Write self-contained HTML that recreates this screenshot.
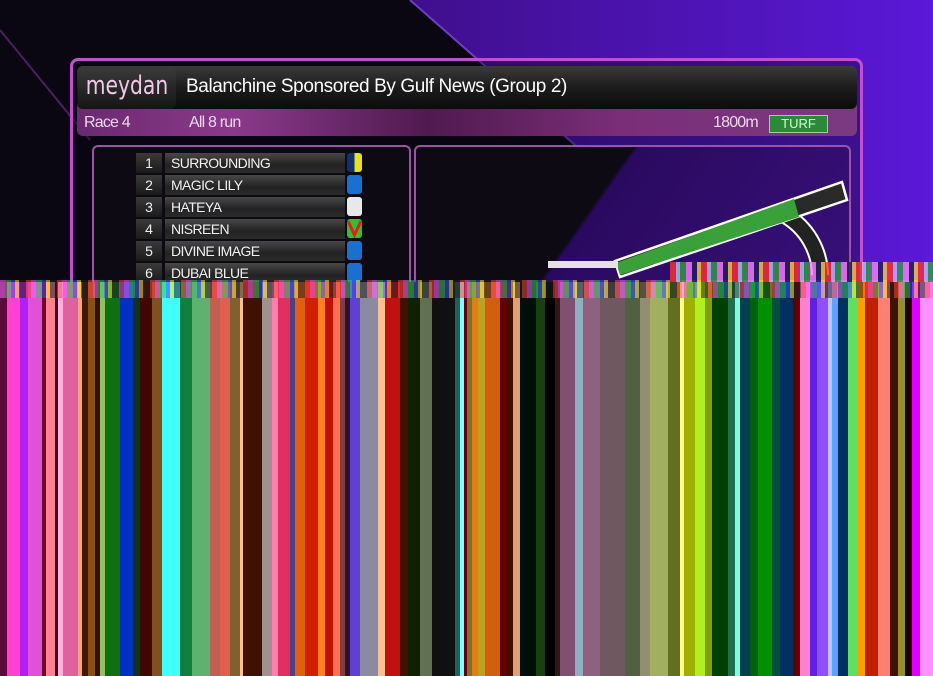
<!DOCTYPE html>
<html><head><meta charset="utf-8"><style>
*{margin:0;padding:0;box-sizing:border-box}
body{width:933px;height:676px;overflow:hidden;position:relative;background:#0a0510;font-family:"Liberation Sans",sans-serif}
.abs{position:absolute}
.row{position:absolute;left:136px;height:20px;width:208px}
.num{position:absolute;left:0;width:26px;height:20px;background:linear-gradient(#3a3a3a,#1a1a1a);color:#eee;font-size:14px;text-align:center;line-height:20px}
.nm{position:absolute;left:29px;width:180px;height:20px;background:linear-gradient(#484848,#222 60%,#2a2a2a);color:#f2f2f2;font-size:14px;line-height:20px;padding-left:6px;letter-spacing:-0.6px}
.silk{position:absolute;left:211px;width:15px;height:19px;border-radius:3px}
</style></head><body>
<svg class="abs" style="left:0;top:0" width="933" height="676">
<defs><linearGradient id="pg" x1="0" x2="1" y1="0" y2="0"><stop offset="0" stop-color="#2a0850"/><stop offset="1" stop-color="#5a18d8"/></linearGradient></defs>
<rect width="933" height="676" fill="url(#pg)"/>
<polygon points="0,0 410,0 740,290 0,290" fill="#0a0612"/>
<line x1="410" y1="0" x2="740" y2="290" stroke="#6a40c0" stroke-width="2"/>
<line x1="0" y1="30" x2="90" y2="140" stroke="#4a2060" stroke-width="2"/>
</svg>
<div class="abs" style="left:70px;top:58px;width:793px;height:240px;border:3px solid #c050d0;border-radius:8px;border-bottom:none;background:rgba(10,5,20,0.35)"></div>
<div class="abs" style="left:77px;top:66px;width:780px;height:70px;border-radius:6px;background:linear-gradient(90deg,#6a2a6e,#8a3a8a 20%,#501a50 45%,#7a2e78 70%,#7a3a80);"></div>
<div class="abs" style="left:77px;top:66px;width:780px;height:43px;border-radius:6px;background:linear-gradient(#3a3a3a,#1c1c1c 50%,#0c0c0c)"></div>
<div class="abs" style="left:78px;top:67px;width:98px;height:42px;border-radius:6px;background:linear-gradient(#3a3a3a,#151515);overflow:hidden"><div style="color:#f0c8e8;font-size:26px;line-height:38px;text-align:center;font-family:'DejaVu Sans',sans-serif;transform:scaleX(0.78);white-space:nowrap;margin-left:-20px;width:138px">meydan</div></div>
<div class="abs" style="left:186px;top:76px;color:#fff;font-size:19px;letter-spacing:-0.4px">Balanchine Sponsored By Gulf News (Group 2)</div>
<div class="abs" style="left:84px;top:114px;color:#f0d8f0;font-size:16px;letter-spacing:-0.8px">Race 4</div>
<div class="abs" style="left:189px;top:114px;color:#f0d8f0;font-size:16px;letter-spacing:-0.8px">All 8 run</div>
<div class="abs" style="left:713px;top:114px;color:#f0d8f0;font-size:16px;letter-spacing:-0.8px">1800m</div>
<div class="abs" style="left:769px;top:115px;width:59px;height:18px;background:#2a8a3a;border:1px solid #a0d0a0;color:#d0ffd0;font-size:13px;text-align:center;line-height:16px">TURF</div>
<div class="abs" style="left:92px;top:145px;width:319px;height:160px;border:2px solid #a050a8;border-radius:6px;border-bottom:none;background:#0e0a14"></div>
<div class="abs" style="left:414px;top:145px;width:437px;height:160px;border:2px solid #a050a8;border-radius:6px;border-bottom:none;background:linear-gradient(125deg,#0e0a14 0,#0e0a14 40%,#2a0a60 41%,#38107a)"></div>
<div class="row" style="top:153px"><div class="num">1</div><div class="nm">SURROUNDING</div><div class="silk" style="background:linear-gradient(90deg,#103070 50%,#e8e020 50%)"></div></div>
<div class="row" style="top:175px"><div class="num">2</div><div class="nm">MAGIC LILY</div><div class="silk" style="background:#1a70d0"></div></div>
<div class="row" style="top:197px"><div class="num">3</div><div class="nm">HATEYA</div><div class="silk" style="background:#e8e8e8"></div></div>
<div class="row" style="top:219px"><div class="num">4</div><div class="nm">NISREEN</div><div class="silk" style="background:#30c030"><svg width="15" height="19"><polyline points="1,2 7.5,16 14,2" fill="none" stroke="#e02020" stroke-width="3"/></svg></div></div>
<div class="row" style="top:241px"><div class="num">5</div><div class="nm">DIVINE IMAGE</div><div class="silk" style="background:#1a70d0"></div></div>
<div class="row" style="top:263px"><div class="num">6</div><div class="nm">DUBAI BLUE</div><div class="silk" style="background:#1a70d0"></div></div>
<svg class="abs" style="left:540px;top:175px" width="320" height="110">
<path d="M245,40 A70,70 0 0 1 280,100" fill="none" stroke="#fff" stroke-width="18"/>
<path d="M245,40 A70,70 0 0 1 280,100" fill="none" stroke="#222" stroke-width="14"/>
<polygon points="75,86 302,7 307,25 80,102" fill="#2a2a2a" stroke="#fff" stroke-width="2.5"/>
<polygon points="76,88 254,24 259,42 80,100" fill="#3aa03a"/>
<rect x="8" y="86" width="70" height="7" fill="#e8e0e8"/>
</svg>
<div class="abs" style="left:0;top:282px;width:933px;height:394px;background:linear-gradient(90deg,#5a0a3a 0 7px,#ff40d0 7px 20px,#b020f0 20px 28px,#e050d8 28px 42px,#700020 42px 46px,#ff8090 46px 55px,#400020 55px 58px,#ffb0e0 58px 63px,#e060a0 63px 78px,#ffa080 78px 82px,#3a1a08 82px 88px,#8a5010 88px 95px,#301000 95px 100px,#90c060 100px 105px,#107010 105px 120px,#0030c0 120px 133px,#103020 133px 140px,#400800 140px 152px,#805020 152px 162px,#40ffff 162px 180px,#108040 180px 192px,#60b070 192px 210px,#c06050 210px 220px,#e06050 220px 230px,#806030 230px 240px,#ffc090 240px 243px,#401000 243px 262px,#a09090 262px 272px,#ff80b0 272px 278px,#e03060 278px 290px,#504080 290px 295px,#e06010 295px 305px,#d02000 305px 318px,#ff8020 318px 325px,#c01000 325px 333px,#ff7050 333px 340px,#804040 340px 345px,#301030 345px 350px,#6040d0 350px 360px,#8a8aa0 360px 378px,#ffc090 378px 385px,#c01010 385px 400px,#401000 400px 408px,#102000 408px 420px,#607050 420px 432px,#101010 432px 455px,#206060 455px 460px,#80ffff 460px 464px,#600010 464px 467px,#807030 467px 472px,#e08010 472px 478px,#c0a020 478px 485px,#d06010 485px 500px,#600000 500px 508px,#401000 508px 513px,#e0a070 513px 520px,#001008 520px 536px,#1a4010 536px 545px,#000 545px 555px,#301818 555px 560px,#805070 560px 575px,#90b0c0 575px 583px,#906080 583px 600px,#705860 600px 625px,#506040 625px 640px,#909070 640px 650px,#a0b060 650px 668px,#607020 668px 680px,#ffff90 680px 684px,#a0b000 684px 695px,#b0f020 695px 705px,#80a010 705px 712px,#004000 712px 728px,#207050 728px 735px,#80ffe0 735px 740px,#004050 740px 750px,#006010 750px 758px,#009000 758px 772px,#005040 772px 780px,#003060 780px 793px,#600000 793px 800px,#ff80d0 800px 810px,#6020e0 810px 817px,#9050ff 817px 828px,#c0c0ff 828px 832px,#60a0ff 832px 838px,#003060 838px 848px,#60e060 848px 858px,#ffa000 858px 865px,#c02000 865px 878px,#ff8070 878px 890px,#401000 890px 898px,#909030 898px 905px,#200000 905px 912px,#e000ff 912px 920px,#ff90ff 920px 933px)"></div>
<div class="abs" style="left:0;top:280px;width:933px;height:18px;opacity:.55;background:repeating-linear-gradient(90deg,#ff60ff 0 5px,#40c060 5px 11px,#3050ff 11px 15px,#ffe040 15px 19px,#202020 19px 26px,#ff4040 26px 31px)"></div>
<div class="abs" style="left:670px;top:262px;width:263px;height:20px;opacity:.8;background:repeating-linear-gradient(90deg,#ff3030 0 6px,#c0c0ff 6px 10px,#30a040 10px 16px,#ff80ff 16px 22px,#202060 22px 27px,#ffd040 27px 31px)"></div>
</body></html>
